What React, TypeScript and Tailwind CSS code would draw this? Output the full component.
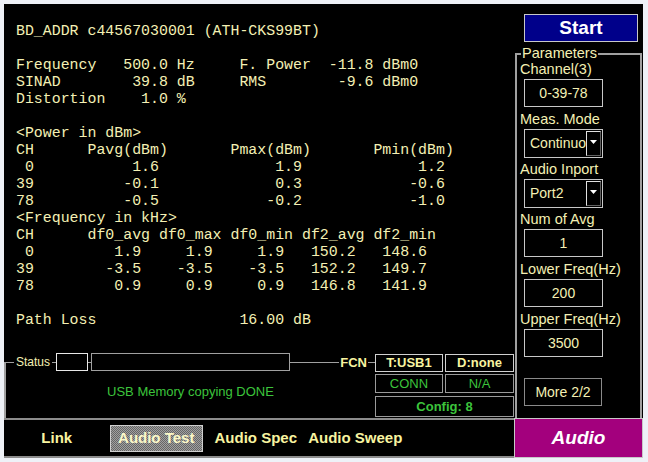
import React from 'react'

// places each text at its character column, like the fixed-width report of the tester
const line = (...parts: [number, string][]) =>
  parts.reduce((s, [col, text]) => s.padEnd(col) + text, '')

const reportLines = [
  'BD_ADDR c44567030001 (ATH-CKS99BT)',
  '',
  line([0, 'Frequency'], [12, '500.0 Hz'], [25, 'F. Power'], [35, '-11.8 dBm0']),
  line([0, 'SINAD'], [13, '39.8 dB'], [25, 'RMS'], [36, '-9.6 dBm0']),
  line([0, 'Distortion'], [14, '1.0 %']),
  '',
  '<Power in dBm>',
  line([0, 'CH'], [8, 'Pavg(dBm)'], [24, 'Pmax(dBm)'], [40, 'Pmin(dBm)']),
  line([1, '0'], [13, '1.6'], [29, '1.9'], [45, '1.2']),
  line([0, '39'], [12, '-0.1'], [29, '0.3'], [44, '-0.6']),
  line([0, '78'], [12, '-0.5'], [28, '-0.2'], [44, '-1.0']),
  '<Frequency in kHz>',
  line([0, 'CH'], [8, 'df0_avg df0_max df0_min df2_avg df2_min']),
  line([1, '0'], [11, '1.9'], [19, '1.9'], [27, '1.9'], [33, '150.2'], [41, '148.6']),
  line([0, '39'], [10, '-3.5'], [18, '-3.5'], [26, '-3.5'], [33, '152.2'], [41, '149.7']),
  line([0, '78'], [11, '0.9'], [19, '0.9'], [27, '0.9'], [33, '146.8'], [41, '141.9']),
  '',
  line([0, 'Path Loss'], [25, '16.00 dB']),
]

const sans = "font-['Liberation_Sans',Arial,sans-serif]"

function ParamLabel({ children, className = '' }: { children: React.ReactNode; className?: string }) {
  return <div className={`h-[18px] text-[14.5px] leading-[18px] text-[#f4f0b4] ${className}`}>{children}</div>
}

function ParamBox({ value }: { value: string }) {
  return (
    <div className="ml-[4px] mt-[1px] mb-[3px] flex h-[28px] w-[79px] items-center justify-center border border-[#c8c8c8] text-[14px] text-[#f4f0b4]">
      {value}
    </div>
  )
}

function ParamSelect({ value }: { value: string }) {
  return (
    <div className="ml-[4px] mt-[1px] mb-[2px] flex h-[29px] w-[79px] items-center border border-[#c8c8c8] pr-[1px]">
      <div className="flex-1 overflow-hidden whitespace-nowrap pl-[5px] text-[14px] text-[#f4f0b4]">{value}</div>
      <div className="flex h-[25px] w-[15px] shrink-0 items-start justify-center border border-t-[#e0e0e0] border-l-[#e0e0e0] border-r-[#606060] border-b-[#606060] pt-[8px]">
        <svg width="7" height="4" viewBox="0 0 7 4">
          <path d="M0 0h7L3.5 4z" fill="#ffffff" />
        </svg>
      </div>
    </div>
  )
}

function HLine({ className = '' }: { className?: string }) {
  return <div className={`h-px bg-[#a0a0a0] ${className}`} />
}

export default function App() {
  return (
    <div className={`h-[462px] w-[648px] bg-[#eef1f7] p-[4px] pr-[5px] ${sans}`}>
      <div className="flex h-[454px] flex-col bg-black">
        <div className="flex h-[414px]">
          {/* left: measurement report + status */}
          <div className="flex w-[510px] flex-col">
            <pre className="pl-[12px] pt-[19px] font-['Liberation_Mono','Courier_New',monospace] text-[14.9px] leading-[17px] text-[#f4f0b4]">
              {reportLines.join('\n')}
            </pre>

            <div className="mt-auto flex h-[66px]">
              <div className="flex flex-1 flex-col pt-[1px]">
                <div className="flex h-[18px] items-center">
                  <div className="h-[9px] w-[10px] self-end border-l-2 border-t border-[#a0a0a0]" />
                  <span className="px-[2px] text-[12px] leading-none text-[#f4f0b4]">Status</span>
                  <HLine className="w-[4px]" />
                  <div className="h-[18px] w-[32px] border border-[#e8e8e8]" />
                  <HLine className="w-[3px]" />
                  <div className="h-[18px] w-[199px] border border-[#a0a0a0]" />
                  <HLine className="flex-1" />
                  <span className="px-[1px] text-[13px] font-bold leading-none text-[#f8f4a0]">FCN</span>
                  <HLine className="w-[7px]" />
                </div>
                <div className="flex flex-1 items-center justify-center border-l-2 border-[#a0a0a0] pb-[6px] text-[13px] text-[#3cc43c]">
                  USB Memory copying DONE
                </div>
              </div>

              <div className="flex w-[139px] flex-col pt-[2px] text-[13px]">
                <div className="flex h-[18px] gap-[2px] font-bold text-[#f8f4a0]">
                  <div className="flex w-[68px] items-center justify-center border border-[#d0d0d0]">T:USB1</div>
                  <div className="flex flex-1 items-center justify-center border border-[#d0d0d0]">D:none</div>
                </div>
                <div className="mt-[2px] flex h-[19px] gap-[2px] text-[#3cc43c]">
                  <div className="flex w-[68px] items-center justify-center border border-[#9a9a9a]">CONN</div>
                  <div className="flex flex-1 items-center justify-center border border-[#9a9a9a]">N/A</div>
                </div>
                <div className="mt-[3px] flex h-[21px] items-center justify-center border border-[#9a9a9a] font-bold text-[#3cc43c]">
                  Config: 8
                </div>
              </div>
            </div>
          </div>

          {/* right: start + parameters */}
          <div className="flex w-[129px] flex-col">
            <button className="ml-[10px] mt-[10px] flex h-[28px] w-[114px] items-center justify-center border border-[#c8c8c8] bg-[#00008a] text-[19px] font-bold text-white">
              Start
            </button>
            <fieldset className="mx-[1px] mt-[3px] flex-1 border-2 border-b-0 border-[#a0a0a0] px-[3px]">
              <legend className="ml-[1px] px-[1px] text-[14.5px] leading-[17px] text-[#f4f0b4]">Parameters</legend>
              <ParamLabel className="-mt-[2px]">Channel(3)</ParamLabel>
              <ParamBox value="0-39-78" />
              <ParamLabel>Meas. Mode</ParamLabel>
              <ParamSelect value="Continuous" />
              <ParamLabel>Audio Inport</ParamLabel>
              <ParamSelect value="Port2" />
              <ParamLabel>Num of Avg</ParamLabel>
              <ParamBox value="1" />
              <ParamLabel>Lower Freq(Hz)</ParamLabel>
              <ParamBox value="200" />
              <ParamLabel>Upper Freq(Hz)</ParamLabel>
              <ParamBox value="3500" />
              <div className="ml-[4px] mt-[21px] flex h-[28px] w-[78px] items-center justify-center border border-[#8a8a8a] text-[14px] text-[#f4f0b4]">
                More 2/2
              </div>
            </fieldset>
          </div>
        </div>

        {/* bottom tabs */}
        <div className="flex h-[40px]">
          <div className="flex w-[510px] items-center border-y-2 border-[#8c8c8c] pl-[3px] text-[15px] font-bold text-[#f8f4a0]">
            <div className="flex w-[99.5px] justify-center">Link</div>
            <div className="flex w-[99.5px] justify-center">
              <div className="flex h-[27px] w-[93px] items-center justify-center border border-[#d0d0d0] bg-[repeating-conic-gradient(#666666_0_25%,#a0a0a0_0_50%)] bg-[length:2px_2px] text-[#fbf8c8]">
                Audio Test
              </div>
            </div>
            <div className="flex w-[99.5px] justify-center">Audio Spec</div>
            <div className="flex w-[99.5px] justify-center">Audio Sweep</div>
          </div>
          <div className="flex w-[129px] items-center justify-center border border-[#c8c8c8] bg-[#a3007d] text-[19px] font-bold italic text-white">
            Audio
          </div>
        </div>
      </div>
    </div>
  )
}
